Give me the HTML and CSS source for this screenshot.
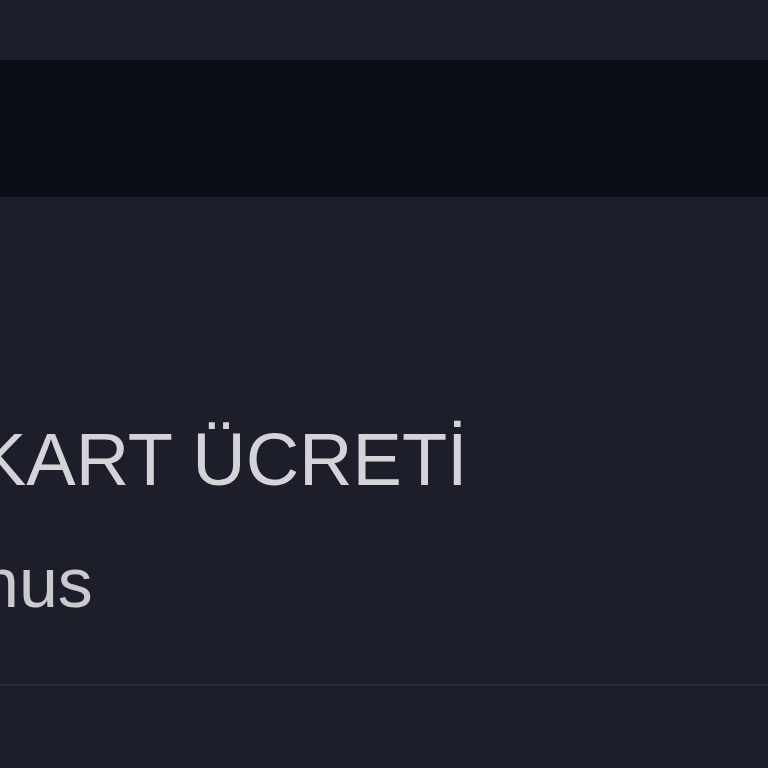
FILE: index.html
```html
<!DOCTYPE html>
<html lang="tr">
<head>
<meta charset="utf-8">
<link rel="stylesheet" href="styles.css">
</head>
<body>
<div class="page">
  <div class="topbar"></div>
  <div class="band"></div>
  <section class="row">
    <div class="title">KART ÜCRETİ</div>
    <div class="sub">nus</div>
  </section>
  <div class="rest"></div>
</div>
</body>
</html>
```
FILE: styles.css
```css
html, body {
  margin: 0;
  padding: 0;
  background: #1c1f2a;
  overflow: hidden;
}
.page {
  width: 768px;
  height: 768px;
  display: flex;
  flex-direction: column;
  font-family: "Liberation Sans", Arial, sans-serif;
  overflow: hidden;
}
.topbar {
  height: 60px;
  background: #1c1f2a;
  flex: none;
}
.band {
  height: 137px;
  background: #0b0e17;
  flex: none;
}
.row {
  padding-top: 225px;
  padding-bottom: 66px;
  border-bottom: 2px solid #2a2d38;
  flex: none;
}
.title {
  font-size: 74px;
  line-height: 76px;
  color: #d3d4d8;
  margin-left: -23px;
  white-space: nowrap;
}
.sub {
  margin-top: 50px;
  font-size: 70px;
  line-height: 70px;
  color: #c9cace;
  margin-left: -20px;
  white-space: nowrap;
}
.rest {
  flex: 1;
  background: #1c1f2a;
}
```
